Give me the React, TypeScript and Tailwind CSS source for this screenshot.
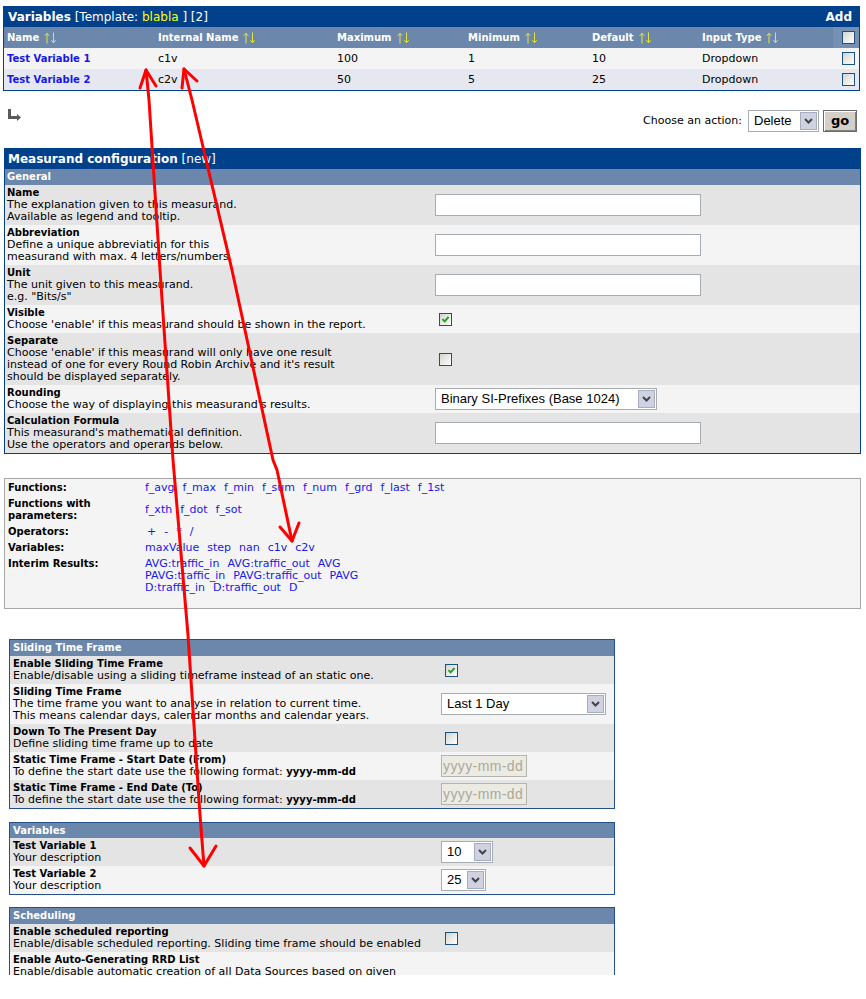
import React from "react";

const Checkbox = ({ checked = false }: { checked?: boolean }) => (
  <span className="relative inline-block w-[13px] h-[13px] border border-[#1c5180] bg-linear-to-br from-[#d4d4ce] to-white">
    {checked && (
      <svg viewBox="0 0 11 11" className="absolute left-0 top-0 w-[11px] h-[11px]">
        <path d="M2.5 5.2 L4.6 7.4 L8.6 3" stroke="#21a121" strokeWidth="1.9" fill="none" />
      </svg>
    )}
  </span>
);

const Select = ({ className, text }: { className: string; text: string }) => (
  <div className={`flex items-center h-[22px] border border-[#a5acb2] bg-white ${className}`}>
    <span className="flex-1 pl-[5px] text-[13px] leading-[16px] font-['Liberation_Sans',Arial,sans-serif] whitespace-nowrap overflow-hidden text-black">
      {text}
    </span>
    <span className="w-[17px] h-[18px] mr-[1px] border border-[#a7acbf] bg-[#cfd2e0] flex items-center justify-center">
      <svg width="9" height="6" viewBox="0 0 9 6">
        <path d="M1 1 L4.5 4.5 L8 1" stroke="#444" strokeWidth="2" fill="none" />
      </svg>
    </span>
  </div>
);

const TextInput = () => <div className="w-[266px] h-[22px] border border-[#a5acb2] bg-white" />;

const DateInput = () => (
  <div className="w-[86px] h-[22px] border border-[#b4b4ac] bg-[#ebebe4] flex items-center overflow-hidden">
    <span className="pl-[1px] text-[14px] tracking-[0.4px] leading-[16px] text-[#aca899] font-['Liberation_Sans',Arial,sans-serif] whitespace-nowrap">
      yyyy-mm-dd
    </span>
  </div>
);

const SortArrows = () => (
  <svg width="13" height="12" viewBox="0 0 13 12" className="ml-[5px]">
    <path d="M3 11.5 V1.5 M0.8 3.8 L3 1.2 L5.2 3.8" stroke="#e4e440" strokeWidth="1" fill="none" />
    <path d="M9.5 0.5 V10.5 M7.3 8.2 L9.5 10.8 L11.7 8.2" stroke="#e4e440" strokeWidth="1" fill="none" />
  </svg>
);

type RowProps = {
  title: React.ReactNode;
  desc: React.ReactNode[];
  control?: React.ReactNode;
  dark: boolean;
  leftClass: string;
};

const Row = ({ title, desc, control, dark, leftClass }: RowProps) => (
  <div className={`flex items-center py-[2px] ${dark ? "bg-[#e4e4e4]" : "bg-[#f4f4f4]"}`}>
    <div className={`whitespace-nowrap ${leftClass}`}>
      <div className="font-bold text-[10px]">{title}</div>
      {desc.map((d, i) => (
        <div key={i}>{d}</div>
      ))}
    </div>
    <div className="pl-[2px] flex items-center">{control}</div>
  </div>
);

const MRow = (p: Omit<RowProps, "leftClass">) => <Row {...p} leftClass="w-[428px] pl-[2px]" />;
const SRow = (p: Omit<RowProps, "leftClass">) => <Row {...p} leftClass="w-[429px] pl-[3px]" />;

const CB = ({ checked = false }: { checked?: boolean }) => (
  <span className="ml-[4px] flex">
    <Checkbox checked={checked} />
  </span>
);

const Link = ({ children }: { children: React.ReactNode }) => (
  <span className="text-[#1818e6] whitespace-nowrap">{children}</span>
);

const FRow = ({ label, children, className = "" }: { label: React.ReactNode; children: React.ReactNode; className?: string }) => (
  <div className="flex items-start">
    <div className="w-[137px] font-bold text-[10px]">{label}</div>
    <div className={`flex flex-col ${className}`}>{children}</div>
  </div>
);

const Words = ({ items }: { items: string[] }) => (
  <div className="flex gap-x-[8px]">
    {items.map((t) => (
      <Link key={t}>{t}</Link>
    ))}
  </div>
);

const SectionHeader = ({ children, className }: { children: React.ReactNode; className: string }) => (
  <div className={`bg-[#6b87ab] text-white font-bold text-[10px] flex items-center ${className}`}>{children}</div>
);

export default function App() {
  const cols = "grid grid-cols-[151px_179px_131px_124px_110px_134px_1fr]";
  return (
    <div className="relative w-[866px] h-[999px] bg-white overflow-hidden">
      <div className="h-[975px] overflow-hidden pt-[6px] text-[11px] leading-[12px] text-black font-['DejaVu_Sans',Verdana,sans-serif]">
        {/* Variables table */}
        <div className="ml-[3px] w-[857px] border border-[#01418b]">
          <div className="h-[20px] bg-[#01418b] text-white text-[12px] leading-[14px] flex items-center justify-between pl-[4px] pr-[7px]">
            <div className="whitespace-nowrap">
              <span className="font-bold">Variables</span> [Template: <span className="text-[#ffff00]">blabla</span> ] [2]
            </div>
            <div className="font-bold">Add</div>
          </div>
          <div className={`${cols} h-[21px] bg-[#6b87ab] text-white font-bold text-[10px] items-center`}>
            {["Name", "Internal Name", "Maximum", "Minimum", "Default", "Input Type"].map((h) => (
              <div key={h} className="flex items-center pl-[3px] whitespace-nowrap">
                {h}
                <SortArrows />
              </div>
            ))}
            <div className="h-full flex items-center justify-end pr-[4px] pl-[5px] bg-[#7690b3]">
              <Checkbox />
            </div>
          </div>
          {[
            ["Test Variable 1", "c1v", "100", "1", "10", "Dropdown", "bg-[#f4f4f4]"],
            ["Test Variable 2", "c2v", "50", "5", "25", "Dropdown", "bg-[#e5e8f1]"],
          ].map((r) => (
            <div key={r[0]} className={`${cols} h-[21px] items-center ${r[6]}`}>
              <div className="pl-[3px] font-bold text-[10px] text-[#1818e6] whitespace-nowrap">{r[0]}</div>
              <div className="pl-[3px]">{r[1]}</div>
              <div className="pl-[3px]">{r[2]}</div>
              <div className="pl-[3px]">{r[3]}</div>
              <div className="pl-[3px]">{r[4]}</div>
              <div className="pl-[3px]">{r[5]}</div>
              <div className="flex justify-end pr-[4px]">
                <Checkbox />
              </div>
            </div>
          ))}
        </div>

        {/* action row */}
        <div className="mt-[18px] flex justify-between items-start h-[23px]">
          <svg width="13" height="13" viewBox="0 0 13 13" className="ml-[8px]">
            <rect x="0" y="0" width="3" height="10" fill="#5a5a5a" />
            <rect x="0" y="7" width="10" height="3" fill="#5a5a5a" />
            <path d="M9 5 L13 8.5 L9 12 Z" fill="#5a5a5a" />
          </svg>
          <div className="mt-[1px] mr-[9px] flex items-center">
            <span className="whitespace-nowrap mr-[6px]">Choose an action:</span>
            <Select className="w-[71px]" text="Delete" />
            <div className="ml-[4px] w-[34px] h-[22px] bg-[#d4d0c8] border border-[#6b6b6b] shadow-[inset_1px_1px_0_#ffffff,inset_-1px_-1px_0_#808080] flex items-center justify-center font-bold text-[13px] leading-[14px]">
              go
            </div>
          </div>
        </div>

        {/* Measurand configuration */}
        <div className="mt-[16px] ml-[4px] w-[857px] border border-[#01418b]">
          <div className="h-[20px] bg-[#01418b] text-white text-[12px] leading-[14px] flex items-center pl-[3px] whitespace-nowrap">
            <span className="font-bold">Measurand configuration</span>&nbsp;[new]
          </div>
          <SectionHeader className="h-[16px] pl-[2px]">General</SectionHeader>
          <MRow dark title="Name" desc={["The explanation given to this measurand.", "Available as legend and tooltip."]} control={<TextInput />} />
          <MRow dark={false} title="Abbreviation" desc={["Define a unique abbreviation for this", "measurand with max. 4 letters/numbers."]} control={<TextInput />} />
          <MRow dark title="Unit" desc={["The unit given to this measurand.", 'e.g. "Bits/s"']} control={<TextInput />} />
          <MRow dark={false} title="Visible" desc={["Choose 'enable' if this measurand should be shown in the report."]} control={<CB checked />} />
          <MRow
            dark
            title="Separate"
            desc={[
              "Choose 'enable' if this measurand will only have one result",
              "instead of one for every Round Robin Archive and it's result",
              "should be displayed separately.",
            ]}
            control={<CB />}
          />
          <MRow dark={false} title="Rounding" desc={["Choose the way of displaying this measurand's results."]} control={<Select className="w-[222px]" text="Binary SI-Prefixes (Base 1024)" />} />
          <MRow dark title="Calculation Formula" desc={["This measurand's mathematical definition.", "Use the operators and operands below."]} control={<TextInput />} />
        </div>

        {/* Functions box */}
        <div className="mt-[24px] ml-[4px] w-[857px] h-[131px] border border-[#a8a8a8] bg-[#f4f4f4] pt-[3px] pl-[3px]">
          <div className="flex flex-col gap-[4px]">
            <FRow label="Functions:">
              <Words items={["f_avg", "f_max", "f_min", "f_sum", "f_num", "f_grd", "f_last", "f_1st"]} />
            </FRow>
            <FRow
              label={
                <>
                  Functions with
                  <br />
                  parameters:
                </>
              }
              className="mt-[6px]"
            >
              <Words items={["f_xth", "f_dot", "f_sot"]} />
            </FRow>
            <FRow label="Operators:">
              <div className="flex gap-x-[8px] pl-[2px]">
                <Link>+</Link>
                <Link>-</Link>
                <Link>*</Link>
                <Link>/</Link>
              </div>
            </FRow>
            <FRow label="Variables:">
              <Words items={["maxValue", "step", "nan", "c1v", "c2v"]} />
            </FRow>
            <FRow label="Interim Results:">
              <Words items={["AVG:traffic_in", "AVG:traffic_out", "AVG"]} />
              <Words items={["PAVG:traffic_in", "PAVG:traffic_out", "PAVG"]} />
              <Words items={["D:traffic_in", "D:traffic_out", "D"]} />
            </FRow>
          </div>
        </div>

        {/* Sliding Time Frame */}
        <div className="mt-[30px] ml-[9px] w-[606px] border border-[#23508a]">
          <SectionHeader className="h-[16px] pl-[3px]">Sliding Time Frame</SectionHeader>
          <SRow dark title="Enable Sliding Time Frame" desc={["Enable/disable using a sliding timeframe instead of an static one."]} control={<CB checked />} />
          <SRow
            dark={false}
            title="Sliding Time Frame"
            desc={["The time frame you want to analyse in relation to current time.", "This means calendar days, calendar months and calendar years."]}
            control={<Select className="w-[165px]" text="Last 1 Day" />}
          />
          <SRow dark title="Down To The Present Day" desc={["Define sliding time frame up to date"]} control={<CB />} />
          <SRow
            dark={false}
            title="Static Time Frame - Start Date (From)"
            desc={[
              <>
                To define the start date use the following format: <b className="text-[10px]">yyyy-mm-dd</b>
              </>,
            ]}
            control={<DateInput />}
          />
          <SRow
            dark
            title="Static Time Frame - End Date (To)"
            desc={[
              <>
                To define the start date use the following format: <b className="text-[10px]">yyyy-mm-dd</b>
              </>,
            ]}
            control={<DateInput />}
          />
        </div>

        {/* Variables */}
        <div className="mt-[13px] ml-[9px] w-[606px] border border-[#23508a]">
          <SectionHeader className="h-[15px] pl-[3px]">Variables</SectionHeader>
          <SRow dark title="Test Variable 1" desc={["Your description"]} control={<Select className="w-[52px]" text="10" />} />
          <SRow dark={false} title="Test Variable 2" desc={["Your description"]} control={<Select className="w-[45px]" text="25" />} />
        </div>

        {/* Scheduling */}
        <div className="mt-[12px] ml-[9px] w-[606px] border border-[#23508a]">
          <SectionHeader className="h-[16px] pl-[3px]">Scheduling</SectionHeader>
          <SRow dark title="Enable scheduled reporting" desc={["Enable/disable scheduled reporting. Sliding time frame should be enabled"]} control={<CB />} />
          <SRow dark={false} title="Enable Auto-Generating RRD List" desc={["Enable/disable automatic creation of all Data Sources based on given", "\u00a0"]} />
        </div>
      </div>

      {/* red annotation arrows */}
      <svg className="absolute left-0 top-0 pointer-events-none" width="866" height="999" viewBox="0 0 866 999">
        <g stroke="#ff0000" strokeWidth="3" fill="none" strokeLinecap="round" strokeLinejoin="round">
          <polyline points="146,70 149,100 160,270 173,460 188,635 200,815 204,866" />
          <polyline points="140,88 146,70 156,86" />
          <polyline points="190,848 204,866 216,846" />
          <polyline points="184,69 192,100 232,270 273,460 277,470 292,541" />
          <polyline points="182,88 184,69 197,81" />
          <polyline points="280,527 292,541 299,523" />
        </g>
      </svg>
    </div>
  );
}
